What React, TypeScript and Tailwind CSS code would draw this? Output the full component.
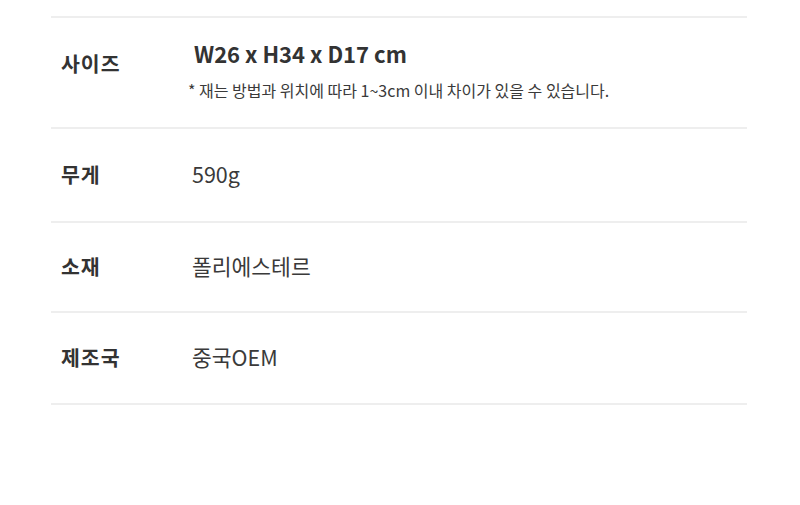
const font = { fontFamily: '"Noto Sans CJK KR", "Noto Sans", sans-serif' }

const rows = [
  { label: '무게', value: '590g', pad: 'pt-[30px] pb-[32px]' },
  { label: '소재', value: '폴리에스테르', pad: 'pt-[28px] pb-[30px]' },
  { label: '제조국', value: '중국OEM', pad: 'pt-[29px] pb-[31px]' },
]

export default function App() {
  return (
    <div className="w-[800px] h-[505px] bg-white pt-[16px]" style={font}>
      <div className="ml-[51px] w-[696px] border-t-2 border-[#eeeeee] text-[#333333]">
        {/* Size row */}
        <div className="flex border-b-2 border-[#eeeeee] pt-[20px] pb-[25px]">
          <div className="w-[141px] shrink-0 pl-[10px] pt-[10px] text-[20.5px] font-bold tracking-[1px] leading-[30px]">사이즈</div>
          <div className="flex flex-col">
            <p className="pl-[2px] text-[22px] font-bold leading-[30px]">W26 x H34 x D17 cm</p>
            <p className="-ml-[4px] mt-[10px] text-[16px] leading-[24px] text-[#3a3a3a]">* 재는 방법과 위치에 따라 1~3cm 이내 차이가 있을 수 있습니다.</p>
          </div>
        </div>

        {rows.map((r) => (
          <div key={r.label} className={`flex items-center border-b-2 border-[#eeeeee] ${r.pad}`}>
            <div className="w-[141px] shrink-0 pl-[10px] text-[20.5px] font-bold tracking-[1px] leading-[30px]">{r.label}</div>
            <div className="text-[21.5px] leading-[30px] text-[#3a3a3a]">{r.value}</div>
          </div>
        ))}
      </div>
    </div>
  )
}
